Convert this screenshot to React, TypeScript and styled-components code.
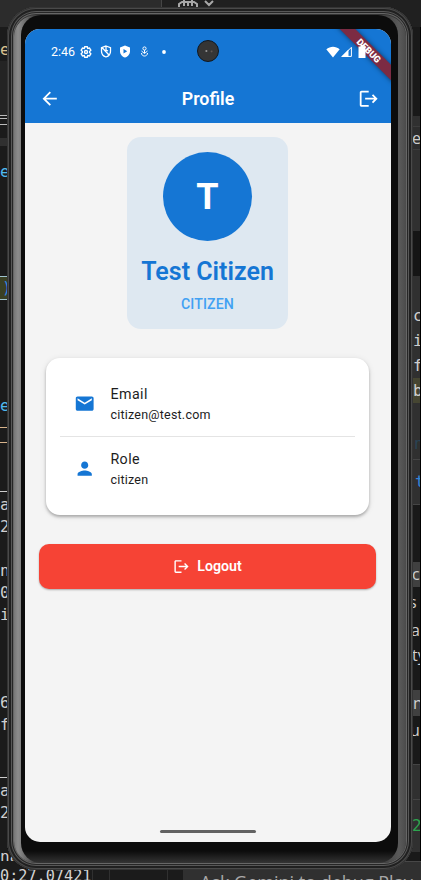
import React from "react";
import styled, { createGlobalStyle } from "styled-components";

const BLUE = "#1576d4";

const GlobalStyle = createGlobalStyle`
  * { box-sizing: border-box; }
  body { margin: 0; background: #1f1f1f; overflow: hidden; }
`;

const Desktop = styled.main`
  display: grid;
  grid-template: 880px / 421px;
  width: 421px;
  height: 880px;
  overflow: hidden;
  background: #1b1b1b;
  font-family: Roboto, sans-serif;

  & > * { grid-area: 1 / 1; }
`;

/* Editor windows on the desktop, visible around the device */
const Workspace = styled.div`
  display: grid;
  grid-template: 27px 834px 19px / 100%;
  overflow: hidden;
`;

const TopStrip = styled.div`
  display: grid;
  grid-template-columns: 162px 1fr;
  background: #202020;
`;

const TabBar = styled.div`
  background: #2c2c2c;
  border-right: 1px solid #454545;
`;

const DesktopIcon = styled.svg`
  margin-left: 14px;
`;

const Editors = styled.div`
  display: flex;
  justify-content: space-between;
`;

const LeftEditor = styled.div`
  width: 60px;
  overflow: hidden;
  background: #1b1b1b;
`;

const RightEditor = styled.div`
  width: 12px;
  overflow: hidden;
  border-right: 1px solid #000;
  background: #191919;
`;

const Line = styled.div<{ $h: number; $bg?: string; $edge?: string; $c?: string; $sans?: boolean; $indent?: number }>`
  height: ${(p) => p.$h}px;
  padding-left: ${(p) => p.$indent ?? 0}px;
  background: ${(p) => p.$bg ?? "transparent"};
  border: 0 solid ${(p) => p.$edge ?? "transparent"};
  border-width: ${(p) => (p.$edge ? "1px 0" : "0")};
  color: ${(p) => p.$c ?? "#cfcfcf"};
  font: 16px/${(p) => (p.$edge ? p.$h - 2 : p.$h)}px ${(p) => (p.$sans ? '"Open Sans", sans-serif' : '"DejaVu Sans Mono", monospace')};
  white-space: pre;
`;

const Paren = styled.span`
  color: #2d86e8;
`;

const BottomStrip = styled.div`
  display: grid;
  grid-template-columns: 93px 17px 58px 15px 1fr;
  min-width: 0;
`;

const BottomCell = styled.div`
  border-right: 1px solid #303030;
  overflow: hidden;
  color: #d4d4d4;
  font: 15.2px/20px "DejaVu Sans Mono", monospace;
  padding-top: 5px;
`;

const Assistant = styled.div`
  padding: 10px 0 0 17px;
  overflow: hidden;
  border-top: 1px solid #474747;
  background: #303030;
  color: #a8a8a8;
  font: 18px/20px "Open Sans", sans-serif;
  white-space: nowrap;
`;

const Shell = styled.div`
  position: relative;
  width: 406px;
  height: 863px;
  margin: 7px 0 0 7px;
  padding: 8px 7px 7px;
  border-radius: 29px;
  background: #333;
  box-shadow:
    inset 0 0 0 1px #343434,
    inset 0 0 0 2px #4a4a4a,
    inset 0 0 0 4px #202020,
    inset 0 0 0 5px #585858,
    inset 0 0 0 6px #262626,
    inset 0 0 0 7px #666;
`;

const Rail = styled.div`
  height: 100%;
  padding: 0 8px 0 7px;
  border-radius: 22px;
  background: linear-gradient(90deg, #777 0, #8c8c8c 4px, #808080 7px, #444 20px, #222 50%, #444 372px, #5a5a5a 385px, #4b4b4b 392px);
`;

const Bezel = styled.div`
  height: 100%;
  padding: 14px 6px 20px 4px;
  border-radius: 20px;
  background: linear-gradient(180deg, #0c0c0c 0, #0c0c0c 836px, #343434 848px);
`;

const Screen = styled.div`
  position: relative;
  display: flex;
  flex-direction: column;
  width: 366px;
  height: 813px;
  border-radius: 15px;
  background: #f4f4f4;
  overflow: hidden;
`;

const Header = styled.header`
  height: 94px;
  flex: none;
  background: ${BLUE};
  color: #fff;
`;

const StatusBar = styled.div`
  position: relative;
  z-index: 1;
  display: flex;
  align-items: center;
  height: 45px;
  padding: 0 25px 0 26px;
  justify-content: space-between;
`;

const StatusGroup = styled.div`
  display: flex;
  align-items: center;
`;

const Clock = styled.span`
  width: 29px;
  font-size: 12.5px;
  line-height: 16px;
`;

const Icon = styled.svg<{ $gap?: number }>`
  display: block;
  flex: none;
  margin-left: ${(p) => p.$gap ?? 0}px;
`;

const CameraHole = styled.div`
  position: absolute;
  left: 172px;
  top: 11px;
  width: 22px;
  height: 22px;
  border-radius: 50%;
  border: 1.5px solid #101820;
  background:
    radial-gradient(circle at 42% 50%, #b8b8b8 0, #777 0.8px, transparent 1.4px),
    radial-gradient(circle at 68% 52%, #665b55 0, transparent 1.5px),
    #353535;
`;

const DebugRibbon = styled.div`
  position: absolute;
  z-index: 2;
  left: 303.5px;
  top: 15.5px;
  width: 80px;
  height: 11px;
  transform: rotate(45deg);
  color: #fff;
  font-size: 9.3px;
  font-weight: 900;
  line-height: 11px;
  text-align: center;
`;

const RibbonBand = styled(DebugRibbon)`
  z-index: 0;
  background: #7c2b43;
  box-shadow: 0 0 5px rgba(0, 0, 0, 0.5);
`;

const AppBar = styled.div`
  display: grid;
  grid-template-columns: 22px 1fr 22px;
  align-items: center;
  height: 49px;
  padding: 0 11px 0 14px;
`;

const Title = styled.h1`
  margin: 0;
  padding-right: 3px;
  font-size: 17.8px;
  font-weight: 600;
  line-height: 24px;
  text-align: center;
`;

const Content = styled.section`
  display: flex;
  flex-direction: column;
  align-items: center;
  padding: 14px 1px 0 0;
`;

const ProfileCard = styled.div`
  display: flex;
  flex-direction: column;
  align-items: center;
  width: 161px;
  height: 192px;
  padding-top: 15px;
  border-radius: 14px;
  background: #dee8f1;
`;

const Avatar = styled.div`
  display: grid;
  place-items: center;
  width: 89px;
  height: 89px;
  border-radius: 50%;
  background: ${BLUE};
  color: #fff;
  font-size: 36px;
  font-weight: 700;
  line-height: 40px;
`;

const Name = styled.h2`
  margin: 15px 0 0;
  color: ${BLUE};
  font-size: 25px;
  font-weight: 600;
  line-height: 32px;
  white-space: nowrap;
`;

const RoleTag = styled.div`
  margin-top: 6px;
  color: #42a1f3;
  font-size: 14.2px;
  font-weight: 500;
  line-height: 20px;
  letter-spacing: 0.1px;
`;

const InfoCard = styled.div`
  width: 323px;
  height: 157px;
  margin-top: 29px;
  padding: 14px;
  border-radius: 14px;
  background: #fff;
  box-shadow: 0 2px 3px rgba(0, 0, 0, 0.26), 0 1px 6px rgba(0, 0, 0, 0.1);
`;

const InfoRow = styled.div`
  display: flex;
  align-items: center;
  gap: 15px;
  height: 64px;
  padding-left: 14px;

  & + & {
    height: 65px;
    border-top: 1px solid #e4e4e4;
  }
`;

const InfoText = styled.div`
  color: #1d1d1d;
`;

const Label = styled.div`
  font-size: 14.25px;
  line-height: 21px;
  letter-spacing: 0.45px;
`;

const Value = styled.div`
  font-size: 12.5px;
  line-height: 19px;
  letter-spacing: 0.22px;
`;

const LogoutButton = styled.button`
  display: flex;
  align-items: center;
  justify-content: center;
  gap: 7px;
  width: 337px;
  height: 45px;
  margin-top: 29px;
  padding: 0 0 1px;
  border: 0;
  border-radius: 10px;
  background: #f64335;
  box-shadow: 0 1px 2px rgba(0, 0, 0, 0.3);
  color: #fff;
  font: 600 14.2px/20px Roboto, sans-serif;
`;

const HomeHandle = styled.div`
  width: 96px;
  height: 3px;
  margin: auto auto 9px 135px;
  border-radius: 2px;
  background: #626262;
`;

const LogoutIcon = ({ size }: { size: number }) => (
  <Icon width={size} height={size} viewBox="0 0 24 24" fill="currentColor">
    <path d="M17 7l-1.41 1.41L18.17 11H8v2h10.17l-2.58 2.58L17 17l5-5zM4 5h8V3H4c-1.1 0-2 .9-2 2v14c0 1.1.9 2 2 2h8v-2H4z" />
  </Icon>
);

const details = [
  {
    label: "Email",
    value: "citizen@test.com",
    path: "M20 4H4c-1.1 0-1.99.9-1.99 2L2 18c0 1.1.9 2 2 2h16c1.1 0 2-.9 2-2V6c0-1.1-.9-2-2-2zm0 4l-8 5-8-5V6l8 5 8-5z",
  },
  {
    label: "Role",
    value: "citizen",
    path: "M12 12c2.21 0 4-1.79 4-4s-1.79-4-4-4-4 1.79-4 4 1.79 4 4 4zm0 2c-2.67 0-8 1.34-8 4v2h16v-2c0-2.66-5.33-4-8-4z",
  },
];

interface EditorLine {
  h: number;
  text?: React.ReactNode;
  c?: string;
  bg?: string;
  edge?: string;
  sans?: boolean;
  indent?: number;
}

const CYAN = "#4fb8ee";

const leftLines: EditorLine[] = [
  { h: 12 },
  { h: 22, text: "e", indent: -6, c: "#d9c08f" },
  { h: 54, bg: "#242424" },
  { h: 4, edge: "#bbb" },
  { h: 5 },
  { h: 1, bg: "#bbb" },
  { h: 13 },
  { h: 8, bg: "#303030" },
  { h: 15 },
  { h: 22, text: "e", c: CYAN },
  { h: 93 },
  { h: 24, text: <Paren>)</Paren>, indent: 2, bg: "#3a4024", edge: "#9fc3ce" },
  { h: 95 },
  { h: 22, text: "e", c: CYAN },
  { h: 10 },
  { h: 16, edge: "#d8b48c" },
  { h: 48 },
  { h: 1, bg: "#ccc" },
  { h: 2 },
  { h: 22, text: "a" },
  { h: 22, text: "2" },
  { h: 22 },
  { h: 22, text: "n" },
  { h: 22, text: "0" },
  { h: 22, text: "i" },
  { h: 66 },
  { h: 22, text: "6" },
  { h: 22, text: "f" },
  { h: 41 },
  { h: 1, bg: "#ccc" },
  { h: 2 },
  { h: 22, text: "a" },
  { h: 22, text: "2" },
  { h: 22 },
  { h: 22, text: "na" },
];

const rightLines: EditorLine[] = [
  { h: 89 },
  { h: 10, bg: "#303030" },
  { h: 24, text: "e", sans: true, indent: 3, bg: "#2d2d2d", edge: "#3c3c3c" },
  { h: 81, bg: "#303030" },
  { h: 45, bg: "#151515" },
  { h: 27, bg: "#303030" },
  { h: 25, text: "c", indent: 4, bg: "#303030" },
  { h: 25, text: "i", indent: 4, bg: "#303030" },
  { h: 25, text: "f", indent: 4, bg: "#303030" },
  { h: 25, text: "b", indent: 4, bg: "#464632" },
  { h: 25, bg: "#303030" },
  { h: 31, text: "n", indent: 5, c: "#294354", bg: "#303030" },
  { h: 46, text: "t", indent: 6, c: "#3186d8", bg: "#303030", edge: "#454545" },
  { h: 57 },
  { h: 25, text: "c", sans: true, indent: 3, bg: "#404040" },
  { h: 31, text: "s", sans: true },
  { h: 24, text: "a", sans: true, indent: 2 },
  { h: 26, text: "ty", sans: true, indent: 3 },
  { h: 22 },
  { h: 26, text: "n", sans: true, indent: 4, bg: "#404040" },
  { h: 28, text: "ue", sans: true, indent: 1 },
  { h: 20 },
  { h: 36, bg: "#303030", edge: "#444" },
  { h: 52, text: "2", indent: 3, c: "#2da44e", bg: "#303030" },
];

const Lines = ({ lines }: { lines: EditorLine[] }) => (
  <>
    {lines.map((l, i) => (
      <Line key={i} $h={l.h} $bg={l.bg} $edge={l.edge} $c={l.c} $sans={l.sans} $indent={l.indent}>
        {l.text}
      </Line>
    ))}
  </>
);

const Backdrop = () => (
  <Workspace>
    <TopStrip>
      <TabBar />
      <DesktopIcon width="40" height="8" viewBox="0 10 40 8" fill="none" stroke="#a8a8a8" strokeWidth="2">
        <path d="M3 17v-3l3-2h12l3 2v3M8 3v13M16 3v13M12 12v4M29 11l4 4 4-4" />
      </DesktopIcon>
    </TopStrip>
    <Editors>
      <LeftEditor>
        <Lines lines={leftLines} />
      </LeftEditor>
      <RightEditor>
        <Lines lines={rightLines} />
      </RightEditor>
    </Editors>
    <BottomStrip>
      <BottomCell>0:27.07421</BottomCell>
      <BottomCell />
      <BottomCell />
      <div />
      <Assistant>Ask Gemini to debug Play</Assistant>
    </BottomStrip>
  </Workspace>
);

function Device() {
  return (
    <Shell>
      <Rail>
        <Bezel>
          <Screen>
            <Header>
              <StatusBar>
                <StatusGroup>
                  <Clock>2:46</Clock>
                  <Icon width="12" height="12" viewBox="0 0 24 24" fill="none" stroke="currentColor" strokeWidth="2.7">
                    <path d="M9.5 1.5h5l1 3.5 3.5-.8 2.7 4.3-2.5 2.5v2l2.5 2.5-2.7 4.3-3.5-.8-1 3.5h-5l-1-3.5-3.5.8-2.700-4.300L4.800 13v-2L2.300 8.500 5 4.200l3.500.8z" />
                    <circle cx="12" cy="12" r="3" />
                  </Icon>
                  <Icon $gap={8} width="12" height="13" viewBox="0 0 24 26" fill="none" stroke="currentColor" strokeWidth="2.6">
                    <path d="M12 2l9 3.500v7c0 5.500-4 10-9 11.500-5-1.500-9-6-9-11.500v-7zM4 5l14 15M12 2v8l4 2" />
                  </Icon>
                  <Icon $gap={7} width="12" height="13" viewBox="0 0 24 26" fill="currentColor">
                    <path fillRule="evenodd" d="M12 1l10 4v7.500C22 18.500 17.500 23.500 12 25 6.500 23.500 2 18.500 2 12.500V5zM9 8v9l7.500-4.500z" />
                  </Icon>
                  <Icon $gap={9} width="9" height="11" viewBox="0 0 18 22" fill="none" stroke="currentColor" strokeWidth="2">
                    <circle cx="9" cy="5" r="3.200" />
                    <path d="M9 8v6M3 10l6 5 6-5M3 14c0 8 12 8 12 0" />
                  </Icon>
                  <Icon $gap={13} width="4" height="4" viewBox="0 0 4 4" fill="currentColor">
                    <circle cx="2" cy="2" r="1.900" />
                  </Icon>
                </StatusGroup>
                <StatusGroup>
                  <Icon width="14" height="12" viewBox="0 0 14 12" fill="currentColor">
                    <path d="M.3 3.300C4.200-.2 9.800-.2 13.700 3.300L7 11.600z" />
                  </Icon>
                  <Icon $gap={1} width="11" height="11" viewBox="0 0 11 11" fill="none" stroke="currentColor">
                    <path d="M1.300 10.400L10.400 1.300v9.100z" />
                    <path d="M0 11L7.500 3.500V11z" fill="currentColor" stroke="none" />
                  </Icon>
                  <Icon $gap={6} width="8" height="13" viewBox="0 0 8 13" fill="currentColor">
                    <path d="M2.500 0h3v1.500h2V13H.5V1.500h2z" />
                  </Icon>
                </StatusGroup>
              </StatusBar>
              <AppBar>
                <Icon width="21.4" height="21.4" viewBox="0 0 24 24" fill="currentColor">
                  <path d="M20 11H7.830l5.590-5.590L12 4l-8 8 8 8 1.410-1.410L7.830 13H20z" />
                </Icon>
                <Title>Profile</Title>
                <LogoutIcon size={21.4} />
              </AppBar>
            </Header>
            <CameraHole />
            <RibbonBand />
            <DebugRibbon>DEBUG</DebugRibbon>
            <Content>
              <ProfileCard>
                <Avatar>T</Avatar>
                <Name>Test Citizen</Name>
                <RoleTag>CITIZEN</RoleTag>
              </ProfileCard>
              <InfoCard>
                {details.map((d) => (
                  <InfoRow key={d.label}>
                    <Icon width="21.4" height="21.4" viewBox="0 0 24 24" fill={BLUE}>
                      <path d={d.path} />
                    </Icon>
                    <InfoText>
                      <Label>{d.label}</Label>
                      <Value>{d.value}</Value>
                    </InfoText>
                  </InfoRow>
                ))}
              </InfoCard>
              <LogoutButton>
                <LogoutIcon size={17} />
                Logout
              </LogoutButton>
            </Content>
            <HomeHandle />
          </Screen>
        </Bezel>
      </Rail>
    </Shell>
  );
}

export default function App() {
  return (
    <Desktop>
      <GlobalStyle />
      <Backdrop />
      <Device />
    </Desktop>
  );
}
